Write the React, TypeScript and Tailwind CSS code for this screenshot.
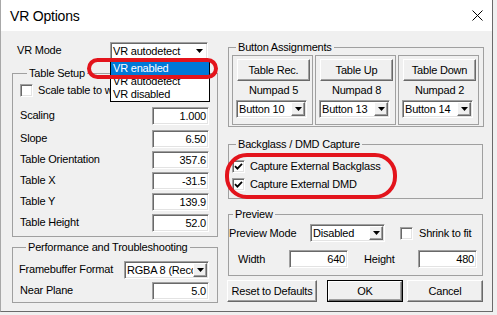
import type { ReactNode } from "react";

const sunken =
  "border border-t-[#a0a0a0] border-l-[#a0a0a0] border-r-white border-b-white shadow-[inset_1px_1px_0_#696969,inset_-1px_-1px_0_#e3e3e3]";
const raised =
  "border border-t-white border-l-white border-r-[#696969] border-b-[#696969] shadow-[inset_-1px_-1px_0_#a0a0a0] bg-[#f0f0f0]";

function Arrow() {
  return (
    <svg width="7" height="4" viewBox="0 0 7 4">
      <path d="M0 0h7L3.5 4z" fill="#000" />
    </svg>
  );
}

function Combo({
  value,
  className = "",
  open = false,
}: {
  value: string;
  className?: string;
  open?: boolean;
}) {
  return (
    <div className={`${sunken} flex h-[18px] bg-white p-[1px] ${className}`}>
      <span className="flex-1 overflow-hidden whitespace-nowrap pl-[1px] leading-[14px]">
        {value}
      </span>
      <span
        className={`flex w-[14px] shrink-0 items-center justify-center ${open ? "" : raised}`}
      >
        <Arrow />
      </span>
    </div>
  );
}

function Edit({ value, className = "w-[57px]" }: { value: string; className?: string }) {
  return (
    <div className={`${sunken} h-[18px] bg-white pr-[2px] text-right leading-[16px] ${className}`}>
      {value}
    </div>
  );
}

function Check({ checked = false }: { checked?: boolean }) {
  return (
    <div className={`${sunken} flex h-[13px] w-[13px] shrink-0 items-center justify-center bg-white`}>
      {checked && (
        <svg width="9" height="9" viewBox="0 0 9 9">
          <path d="M1 4.2L3.4 6.6L8 1.8" fill="none" stroke="#000" strokeWidth="1.8" />
        </svg>
      )}
    </div>
  );
}

function Group({
  title,
  className = "",
  legend = "ml-[7px]",
  children,
}: {
  title: string;
  className?: string;
  legend?: string;
  children: ReactNode;
}) {
  return (
    <fieldset className={`border border-[#a0a0a0] ${className}`}>
      <legend className={`${legend} px-[2px] leading-[13px]`}>{title}</legend>
      {children}
    </fieldset>
  );
}

function FieldRow({ label, value, className = "" }: { label: string; value: string; className?: string }) {
  return (
    <div className={`flex h-[21px] items-center justify-between ${className}`}>
      <span>{label}</span>
      <Edit value={value} />
    </div>
  );
}

function Assign({ name, key2, button }: { name: string; key2: string; button: string }) {
  return (
    <div className="flex h-[70px] w-[81px] flex-col border border-[#a0a0a0] pl-[3px] pt-[3px]">
      <div className={`${raised} ml-[1px] flex h-[22px] w-[73px] items-center justify-center`}>
        {name}
      </div>
      <div className="ml-[1px] mt-[3px] h-[13px] w-[73px] text-center leading-[13px]">{key2}</div>
      <Combo className="mt-[3px] w-[71px]" value={button} />
    </div>
  );
}

const rows = [
  { label: "Table Orientation", value: "357.6" },
  { label: "Table X", value: "-31.5" },
  { label: "Table Y", value: "139.9" },
  { label: "Table Height", value: "52.0" },
];

export default function App() {
  return (
    <div className="h-[315px] w-[497px] bg-[#f0f0f0] font-['Liberation_Sans',Arial,sans-serif] text-[11px] tracking-[-0.2px] text-black">
      <div className="relative flex h-[312px] w-[493px] flex-col border-b border-l border-r border-b-[#6a6a6a] border-l-[#a8a8a8] border-r-[#6a6a6a]">
        <div className="flex h-[31px] shrink-0 items-center justify-between bg-white px-[9px]">
          <span className="pt-[2px] text-[14px]">VR Options</span>
          <svg width="11" height="11" viewBox="0 0 11 11">
            <path d="M0.5 0.5L10.5 10.5M10.5 0.5L0.5 10.5" stroke="#000" strokeWidth="1" />
          </svg>
        </div>

        <div className="flex flex-1 pl-[11px] pt-[10px]">
          <div className="flex w-[206px] flex-col">
            <div className="mt-[1px] flex h-[17px] items-center">
              <span className="w-[98px] pl-[5px]">VR Mode</span>
              <Combo value="VR autodetect" open className="h-[17px] w-[98px]" />
            </div>

            <Group title="Table Setup" className="mt-[8px] pb-[3px] pl-[7px] pr-[8px]">
              <div className="flex h-[21px] items-center overflow-hidden whitespace-nowrap">
                <Check />
                <span className="ml-[5px]">Scale table to world</span>
              </div>
              <FieldRow className="mt-[4px]" label="Scaling" value="1.000" />
              <FieldRow className="mt-[2px]" label="Slope" value="6.50" />
              {rows.map((r) => (
                <FieldRow key={r.label} label={r.label} value={r.value} />
              ))}
            </Group>

            <Group title="Performance and Troubleshooting" className="mt-[4px] pb-[1px] pl-[6px] pr-[8px]">
              <div className="mt-[5px] flex h-[21px] items-center justify-between">
                <span>Framebuffer Format</span>
                <Combo value="RGBA 8 (Recommended)" className="w-[85px]" />
              </div>
              <div className="flex h-[21px] items-center justify-between pl-[1px]">
                <span>Near Plane</span>
                <Edit value="5.0" />
              </div>
            </Group>
          </div>

          <div className="ml-[10px] flex w-[255px] flex-col">
            <Group title="Button Assignments" legend="ml-[4px]" className="pb-[1px] pl-[3px] pr-[4px]">
              <div className="mt-[1px] flex gap-[2px]">
                <Assign name="Table Rec." key2="Numpad 5" button="Button 10" />
                <Assign name="Table Up" key2="Numpad 8" button="Button 13" />
                <Assign name="Table Down" key2="Numpad 2" button="Button 14" />
              </div>
            </Group>

            <Group title="Backglass / DMD Capture" legend="ml-[4px]" className="mt-[11px] pb-[5px] pl-[3px]">
              <div className="mt-[6px] flex h-[18px] items-center">
                <Check checked />
                <span className="ml-[5px]">Capture External Backglass</span>
              </div>
              <div className="flex h-[18px] items-center">
                <Check checked />
                <span className="ml-[5px]">Capture External DMD</span>
              </div>
            </Group>

            <Group title="Preview" legend="ml-[4px]" className="mt-[9px] pb-[6px]">
              <div className="mt-[2px] flex h-[20px] items-center">
                <span className="w-[81px]">Preview Mode</span>
                <Combo value="Disabled" className="w-[75px]" />
                <div className="ml-[15px]">
                  <Check />
                </div>
                <span className="ml-[6px]">Shrink to fit</span>
              </div>
              <div className="mt-[6px] flex h-[20px] items-center">
                <span className="w-[60px] pl-[9px]">Width</span>
                <Edit value="640" className="w-[59px]" />
                <span className="ml-[16px] w-[54px]">Height</span>
                <Edit value="480" className="w-[59px]" />
              </div>
            </Group>

            <div className="mt-[4px] flex h-[22px]">
              <div className={`${raised} -ml-[1px] flex w-[90px] items-center justify-center`}>
                Reset to Defaults
              </div>
              <div className="ml-[10px] w-[76px] border border-black">
                <div className={`${raised} flex h-full items-center justify-center`}>OK</div>
              </div>
              <div className={`${raised} ml-[4px] flex w-[76px] items-center justify-center`}>
                Cancel
              </div>
            </div>
          </div>
        </div>

        <div className="absolute left-[109px] top-[60px] w-[100px] border border-black bg-white pt-[1px]">
          <div className="h-[13px] bg-[#0078d7] pl-[2px] leading-[13px] text-white">VR enabled</div>
          <div className="h-[13px] pl-[2px] leading-[13px]">VR autodetect</div>
          <div className="h-[13px] pl-[2px] leading-[13px]">VR disabled</div>
        </div>

        <div className="absolute left-[86px] top-[58px] h-[21px] w-[131px] rounded-full border-[4px] border-[#e3141c]" />
        <div className="absolute left-[224px] top-[153px] h-[46px] w-[172px] rounded-[22px] border-[4px] border-[#e3141c]" />
      </div>
    </div>
  );
}
